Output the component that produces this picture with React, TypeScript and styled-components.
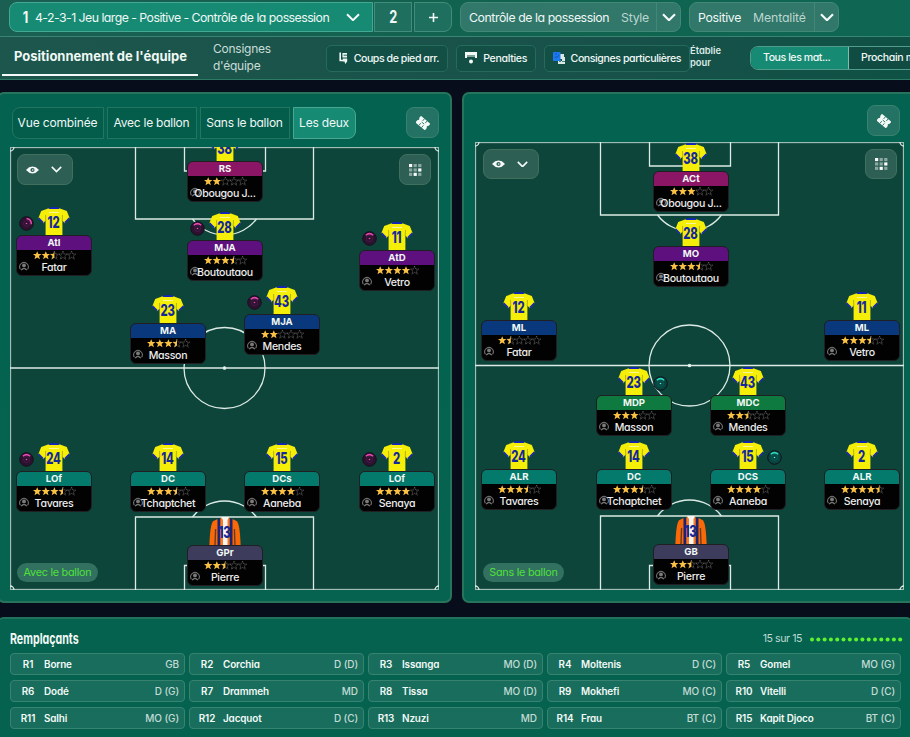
import React from 'react';
import styled, { createGlobalStyle } from 'styled-components';

const Global = createGlobalStyle`
  html, body { margin: 0; padding: 0; background: #080d1b; overflow: hidden; }
  * { box-sizing: border-box; }
  svg { flex: none; }
  body {
    font-family: Inter, "Liberation Sans", sans-serif;
    font-feature-settings: "cv11" 1;
    color: #f1f8f5;
  }
`;

const Page = styled.div`
  width: 910px;
  height: 737px;
  display: flex;
  flex-direction: column;
  overflow: hidden;
  background: #080d1b;
`;

const Label = styled.span<{ size: number; track?: number; weight?: number; tone?: string }>`
  font-size: ${p => p.size}px;
  letter-spacing: ${p => p.track ?? 0}px;
  font-weight: ${p => p.weight ?? 400};
  color: ${p => p.tone ?? '#eff8f5'};
  white-space: nowrap;
`;

/* ---------- header ---------- */

const TopBar = styled.div`
  height: 36px;
  flex: none;
  display: flex;
  align-items: flex-start;
  padding: 2px 0 0 9px;
  background: linear-gradient(90deg, #1a5f52, #10634f 60%, #0e6753);
`;

const TacticTab = styled.div`
  width: 364px;
  height: 30px;
  padding: 0 12px 0 12px;
  flex: none;
  display: flex;
  align-items: center;
  border: 1px solid #45a892;
  border-radius: 8px 0 0 8px;
  background: #178a74;
`;

const SlotTab = styled.div<{ last?: boolean }>`
  width: 38px;
  height: 30px;
  flex: none;
  margin-left: ${p => (p.last ? 2 : 1)}px;
  display: flex;
  align-items: center;
  justify-content: center;
  border: 1px solid #438c7c;
  border-radius: ${p => (p.last ? '0 8px 8px 0' : '0')};
  background: #1f6f5f;
`;

const Condensed = styled.span<{ size: number; squeeze: number; origin?: string }>`
  display: inline-block;
  font-size: ${p => p.size}px;
  font-weight: 700;
  line-height: 1;
  white-space: nowrap;
  transform: scaleX(${p => p.squeeze});
  transform-origin: ${p => p.origin ?? 'center'};
`;

const Picker = styled.div<{ w: number }>`
  width: ${p => p.w}px;
  height: 30px;
  flex: none;
  margin-left: 8px;
  display: flex;
  align-items: center;
  border: 1px solid #438876;
  border-radius: 8px;
  background: #31776a;
`;

const PickerText = styled.div`
  flex: 1;
  display: flex;
  align-items: center;
  gap: 12px;
  padding-left: 8px;
`;

const PickerArrow = styled.div`
  width: 24px;
  height: 28px;
  display: flex;
  align-items: center;
  justify-content: center;
  border-left: 1px solid #438876;
`;

const NavBar = styled.div`
  height: 44px;
  flex: none;
  display: flex;
  border-top: 1px solid #398573;
  border-bottom: 1px solid #2c7c65;
  background: linear-gradient(90deg, #1d564c, #175149 70%, #0f5145);
`;

const ActiveNav = styled.div`
  width: 196px;
  height: 39px;
  flex: none;
  margin-left: 2px;
  padding-left: 1px;
  display: flex;
  align-items: center;
  justify-content: center;
  border-bottom: 2px solid #f4faf8;
`;

const NavItem = styled.div`
  width: 98px;
  flex: none;
  margin-left: 15px;
  padding-top: 3px;
  font-size: 12px;
  line-height: 17px;
  letter-spacing: -0.25px;
  color: #c9ddd8;
`;

const NavButton = styled.div<{ w: number; gap: number }>`
  width: ${p => p.w}px;
  height: 27px;
  flex: none;
  margin: 8px 0 0 ${p => p.gap}px;
  padding: 0 8px 1px 0;
  display: flex;
  align-items: center;
  justify-content: flex-end;
  gap: 6px;
  border: 1px solid #266a5c;
  border-radius: 5px;
  background: #134f45;
`;

const Established = styled.div`
  width: 60px;
  flex: none;
  padding-top: 8px;
  font-size: 9.4px;
  line-height: 12px;
  font-weight: 600;
  color: #dbeae6;
`;

const MatchToggle = styled.div`
  display: flex;
  flex: none;
  width: 170px;
  height: 24px;
  margin-top: 9px;
  border: 1px solid #4f9d8a;
  border-radius: 8px 0 0 8px;
  overflow: hidden;
`;

const MatchOption = styled.div<{ active?: boolean }>`
  width: ${p => (p.active ? 98 : 80)}px;
  flex: none;
  padding: 0 0 1px 12px;
  display: flex;
  align-items: center;
  background: ${p => (p.active ? '#178a74' : '#114c42')};
  border-right: 1px solid #7fbdae;
`;

/* ---------- panels ---------- */

const Panels = styled.div`
  height: 511px;
  flex: none;
  margin: 12px -3px 0 -3px;
  display: flex;
  gap: 10px;
`;

const Panel = styled.section`
  width: 455px;
  flex: none;
  height: 511px;
  border: 2px solid #28735c;
  border-radius: 7px;
  background: linear-gradient(180deg, #036350, #05634f);
`;

const PanelHead = styled.div<{ h: number; pad: string }>`
  height: ${p => p.h}px;
  padding: ${p => p.pad};
  display: flex;
  align-items: flex-start;
`;

const ViewTab = styled.div<{ w: number; active?: boolean; first?: boolean }>`
  width: ${p => p.w}px;
  height: 32px;
  flex: none;
  margin-right: 3px;
  padding: 0 1px 1px 0;
  display: flex;
  align-items: center;
  justify-content: center;
  border: 1px solid ${p => (p.active ? '#4ba792' : '#24755f')};
  border-radius: ${p => (p.first ? '8px 0 0 8px' : p.active ? '0 8px 8px 0' : '0')};
  background: ${p => (p.active ? '#178a74' : '#045c4b')};
`;

const SquareButton = styled.div`
  width: 33px;
  height: 31px;
  margin-left: auto;
  display: flex;
  align-items: center;
  justify-content: center;
  border: 1px solid #3a8270;
  border-radius: 8px;
  background: #237263;
`;

const Pitch = styled.div<{ h: number }>`
  position: relative;
  width: 429px;
  height: ${p => p.h}px;
  margin-left: 11px;
  overflow: hidden;
  background: #0e453b;
`;

const Markings = styled.svg`
  display: block;
`;

const ViewMenu = styled.div<{ inset: number; h: number }>`
  position: absolute;
  left: ${p => p.inset}px;
  top: 7px;
  width: 56px;
  height: ${p => p.h}px;
  padding-right: 2px;
  display: flex;
  align-items: center;
  justify-content: center;
  gap: 12px;
  border: 1px solid #42705f;
  border-radius: 8px;
  background: #2d5f55;
`;

const GridMenu = styled.div<{ inset: number; h: number }>`
  position: absolute;
  right: ${p => p.inset}px;
  top: 7px;
  width: 32px;
  height: ${p => p.h}px;
  display: flex;
  align-items: center;
  justify-content: center;
  border: 1px solid #42705f;
  border-radius: 8px;
  background: #2d5f55;
`;

const PhaseTag = styled.div<{ inset: number }>`
  position: absolute;
  left: ${p => p.inset}px;
  bottom: 8px;
  width: 81px;
  height: 19px;
  padding-bottom: 1px;
  display: flex;
  align-items: center;
  justify-content: center;
  border-radius: 10px;
  background: #327060;
`;

/* ---------- players ---------- */

const PlayerNode = styled.div<{ x: number; y: number }>`
  position: absolute;
  left: ${p => p.x - 38}px;
  top: ${p => p.y - 28}px;
  width: 76px;
`;

const ShirtWrap = styled.div`
  height: 28px;
  display: flex;
  justify-content: center;
  padding-right: 1px;
`;

const ShirtNumber = styled.span`
  position: absolute;
  left: 0;
  top: 8px;
  width: 75px;
  text-align: center;
  font-size: 15.5px;
  line-height: 15px;
  font-weight: 800;
  color: #14289c;
  letter-spacing: -0.3px;
  transform: scaleX(0.73);
`;

const Duty = styled.svg<{ side: 'left' | 'right' }>`
  position: absolute;
  top: 9px;
  left: ${p => (p.side === 'left' ? 3 : 57)}px;
`;

const Card = styled.div`
  height: 41px;
  border: 1px solid #211f24;
  border-radius: 6px;
  overflow: hidden;
  background: #020202;
`;

const Role = styled.div<{ fill: string; edge: string }>`
  height: 15px;
  margin: -1px -1px 0;
  padding-bottom: 1px;
  display: flex;
  align-items: center;
  justify-content: center;
  border: 1px solid ${p => p.edge};
  border-bottom: 0;
  border-radius: 6px 6px 0 0;
  background: ${p => p.fill};
  font-size: 9.6px;
  font-weight: 700;
`;

const Stars = styled.svg`
  display: block;
  margin: 1px auto 0;
`;

const NameRow = styled.div`
  position: relative;
  height: 15px;
  line-height: 16px;
  text-align: center;
  font-size: 10.6px;
  font-weight: 500;
  letter-spacing: -0.3px;
  color: #ececec;
  white-space: nowrap;
`;

const Face = styled.svg`
  position: absolute;
  left: 2px;
  top: 1px;
`;

const NameText = styled.span`
  position: relative;
`;

/* ---------- bench ---------- */

const Bench = styled.section`
  height: 130px;
  flex: none;
  margin: 14px -3px 0 -3px;
  padding: 0 12px 0 13px;
  border-top: 2px solid #1f735d;
  border-radius: 7px 7px 0 0;
  background: #04624f;
`;

const BenchHead = styled.div`
  height: 34px;
  padding: 5px 0 0;
  display: flex;
  align-items: center;
  justify-content: space-between;
`;

const BenchCount = styled.div`
  display: flex;
  align-items: center;
  gap: 7px;
  margin-right: -2px;
`;

const BenchGrid = styled.div`
  display: grid;
  grid-template-columns: repeat(5, 1fr);
  column-gap: 4px;
  row-gap: 5px;
`;

const BenchCell = styled.div`
  height: 22px;
  padding: 0 5px 1px 0;
  display: grid;
  grid-template-columns: 33px 1fr auto;
  align-items: center;
  border: 1px solid #388370;
  border-radius: 4px;
  background: #196d5d;
  font-size: 9.9px;
  font-weight: 600;
  letter-spacing: -0.12px;
  color: #f3faf7;
`;

const BenchSlot = styled.span`
  text-align: center;
  padding-left: 1px;
`;

const BenchPosition = styled.span`
  font-size: 10px;
  font-weight: 500;
  letter-spacing: -0.1px;
  color: #c3dcd5;
`;

/* ---------- drawings ---------- */

const Chevron = ({ w, stroke = 2 }: { w: number; stroke?: number }) => (
  <svg width={w} height={w * 0.62} viewBox="0 0 14 8.7">
    <path d="M1 1.2 7 7.2 13 1.2" fill="none" stroke="#f3faf8" strokeWidth={stroke} />
  </svg>
);

const SetPieceIcon = () => (
  <svg width="9" height="12" viewBox="0 0 9 12">
    <path d="M1.2 .5V8.5H4" fill="none" stroke="#f3faf8" strokeWidth="1.6" />
    <path d="M3.4 1H8V5.4H3.4ZM3.8 6.6H8.2V9.5L6.2 12L5.5 9.5H3.8Z" fill="#eaf4f1" />
    <path d="M4.6 3.2H8" stroke="#17564b" strokeWidth=".9" />
  </svg>
);

const PenaltyIcon = () => (
  <svg width="12" height="12" viewBox="0 0 12 12">
    <path d="M0 0H12V6H10V3H2V6H0Z" fill="#f3faf8" />
    <path d="M2 3H10V5H2Z" fill="#7fa39b" />
    <circle cx="6" cy="9.6" r="2" fill="#f3faf8" />
  </svg>
);

const InstructionIcon = () => (
  <svg width="12" height="12" viewBox="0 0 12 12">
    <path d="M7 2H11V5H12V12H5V9H9V7H7Z" fill="#dbe9e6" />
    <path d="M6 8H8V10H6ZM9 9H12V10H9Z" fill="#4f7f75" />
    <rect width="7.5" height="9" rx="0.6" fill="#1b78ee" />
    <path d="M1.8 6 3 4.5 4 5.6 6 3M2 2H4" fill="none" stroke="#0e50af" strokeWidth="0.8" />
  </svg>
);

const TicketIcon = () => (
  <svg width="14" height="14" viewBox="0 0 13 13">
    <g transform="rotate(40 6.5 6.5)">
      <path d="M.8 2.6H12.2V5L11.2 6.5L12.2 8V10.6H.8V8L1.8 6.5L.8 5Z" fill="#f3faf8" />
      <path d="M5 2.6V5.2M5 8V10.6M8.2 2.6V5.2M8.2 8V10.6M5 6.6H8" stroke="#237263" strokeWidth=".8" />
    </g>
  </svg>
);

const EyeIcon = () => (
  <svg width="13" height="8" viewBox="0 0 13 8">
    <path d="M0 4Q3 .6 6.5 .6T13 4Q10 7.4 6.5 7.4T0 4Z" fill="#f5faf8" />
    <circle cx="6.5" cy="4" r="2.1" fill="#2d5f55" />
    <circle cx="6.7" cy="4" r=".8" fill="#f5faf8" />
  </svg>
);

const GridIcon = () => {
  const bright = [0, 5, 7];
  return (
    <svg width="13" height="12" viewBox="0 0 13 12">
      {Array.from({ length: 9 }, (_, i) => (
        <rect
          key={i}
          x={(i % 3) * 4.6}
          y={Math.floor(i / 3) * 4.4}
          width="3.2"
          height="3.1"
          fill={bright.includes(i) ? '#ffffff' : '#8ca9a1'}
        />
      ))}
    </svg>
  );
};

const STAR = 'M4.2 0 5.4 2.9H8.4L6 4.9 6.9 8 4.2 6.2 1.5 8 2.4 4.9 0 2.9H3Z';
const HALF = 'M4.2 0 4.2 6.2 1.5 8 2.4 4.9 0 2.9H3Z';

const Rating = ({ value }: { value: number }) => (
  <Stars width="43" height="9" viewBox="0 0 43 9">
    {[0, 1, 2, 3, 4].map(i => (
      <g key={i} transform={`translate(${i * 8.6} .2)`}>
        {value >= i + 1 ? (
          <path d={STAR} fill="#fbc143" />
        ) : (
          <>
            <path d={STAR} fill="none" stroke="#858588" strokeWidth=".6" strokeDasharray="1.2 .5" />
            {value > i && <path d={HALF} fill="#fbc143" />}
          </>
        )}
      </g>
    ))}
  </Stars>
);

const Shirt = () => (
  <svg width="32" height="28" viewBox="0 0 32 28">
    <path d="M10 1.6 3.2 4 .4 11 5.2 16.2 7.6 13.5V28H24.4V13.5L26.8 16.2 31.6 11 28.8 4 22 1.6Z" fill="#f5ee08" />
    <path d="M11.5 .2H20.5L21 2H11Z" fill="#1422c4" />
    <path d="M.9 10.2 5.6 15 5 16.6.3 11.8ZM31.1 10.2 26.4 15 27 16.6 31.7 11.8Z" fill="#1422c4" />
    <path d="M7.5 8 7.8 14M24.5 8 24.2 14" stroke="#a9a300" strokeWidth=".8" />
    <path d="M11 5H21V6H11Z" fill="#fbf69a" />
  </svg>
);

const KeeperShirt = () => (
  <svg width="32" height="28" viewBox="0 0 32 28">
    <path d="M8 2.2 4 4.2Q1 8 .4 28H31.6Q31 8 28 4.2L24 2.2Z" fill="#fb6808" />
    <path d="M6.6 12 6 28M25.4 12 26 28" stroke="#6b3c1b" strokeWidth="1.4" />
    <path d="M8.5 2H11.5V28H8.5ZM20.5 2H23.5V28H20.5Z" fill="#1a2470" />
    <path d="M11.5 1H14.5V28H11.5ZM17.5 1H20.5V28H17.5Z" fill="#fb7a24" />
    <path d="M12 0H20L18.5 3V28H14V3Z" fill="#f7f5f2" />
  </svg>
);

const FaceIcon = () => (
  <Face width="10" height="10" viewBox="0 0 10 10">
    <path d="M1.4 8.2A4.3 4.3 0 1 1 8.6 8.2" fill="none" stroke="#6c6c6c" strokeWidth="1.1" />
    <circle cx="5" cy="4.4" r="1.9" fill="#7b7b7b" />
    <path d="M1.6 8.8Q5 4.8 8.4 8.8L7.6 9.5 5 7.9 2.4 9.5Z" fill="#757575" />
  </Face>
);

type Side = 'left' | 'right';

const DutyIcon = ({ side, turn = 0 }: { side: Side; turn?: number }) => {
  const pink = side === 'left';
  return (
    <Duty side={side} width="15" height="15" viewBox="0 0 15 15">
      <circle cx="7.5" cy="7.5" r="6.8" fill={pink ? '#2c1230' : '#064540'} stroke="#15111c" strokeWidth="1" />
      <circle cx="7.5" cy="7.5" r="3" fill="none" stroke={pink ? '#501b49' : '#0b6259'} strokeWidth=".8" />
      <path
        d="M3.8 4.3Q7.5 1 11.2 4.3"
        fill="none"
        stroke={pink ? '#e84bb2' : '#2edac2'}
        strokeWidth="1.5"
        transform={`rotate(${turn} 7.5 7.5)`}
      />
      <circle cx="7.5" cy="7.5" r=".8" fill={pink ? '#e650b2' : '#5cead8'} />
    </Duty>
  );
};

/* ---------- data ---------- */

const ROLE_COLOURS = {
  pink: ['#8b1666', '#a8397f'],
  purple: ['#5e107f', '#7c3199'],
  blue: ['#09387c', '#2b5799'],
  teal: ['#047a6d', '#2d988a'],
  green: ['#0f7a3f', '#33945b'],
  grey: ['#3e3c5d', '#575576'],
};

interface Player {
  x: number;
  y: number;
  no: number;
  role: string;
  tone: keyof typeof ROLE_COLOURS;
  stars: number;
  name: string;
  duty?: Side;
  turn?: number;
}

const withBall: Player[] = [
  { x: 215, y: 14, no: 38, role: 'RS', tone: 'pink', stars: 2, name: 'Obougou J...' },
  { x: 44, y: 88, no: 12, role: 'AtI', tone: 'purple', stars: 2.5, name: 'Fatar', duty: 'left', turn: 50 },
  { x: 215, y: 93, no: 28, role: 'MJA', tone: 'purple', stars: 3.5, name: 'Boutoutaou', duty: 'left' },
  { x: 387, y: 103, no: 11, role: 'AtD', tone: 'purple', stars: 4, name: 'Vetro', duty: 'left' },
  { x: 158, y: 176, no: 23, role: 'MA', tone: 'blue', stars: 3.5, name: 'Masson' },
  { x: 272, y: 167, no: 43, role: 'MJA', tone: 'blue', stars: 2, name: 'Mendes', duty: 'left' },
  { x: 44, y: 324, no: 24, role: 'LOf', tone: 'teal', stars: 3.5, name: 'Tavares', duty: 'left' },
  { x: 158, y: 324, no: 14, role: 'DC', tone: 'teal', stars: 3.5, name: 'Tchaptchet' },
  { x: 272, y: 324, no: 15, role: 'DCs', tone: 'teal', stars: 4, name: 'Aaneba' },
  { x: 387, y: 324, no: 2, role: 'LOf', tone: 'teal', stars: 4, name: 'Senaya', duty: 'left' },
  { x: 215, y: 398, no: 13, role: 'GPr', tone: 'grey', stars: 2.5, name: 'Pierre' },
];

const withoutBall: Player[] = [
  { x: 216, y: 29, no: 38, role: 'ACt', tone: 'pink', stars: 3, name: 'Obougou J...' },
  { x: 216, y: 104, no: 28, role: 'MO', tone: 'purple', stars: 3.5, name: 'Boutoutaou' },
  { x: 44, y: 178, no: 12, role: 'ML', tone: 'blue', stars: 1.5, name: 'Fatar' },
  { x: 387, y: 178, no: 11, role: 'ML', tone: 'blue', stars: 3.5, name: 'Vetro' },
  { x: 159, y: 253, no: 23, role: 'MDP', tone: 'green', stars: 3, name: 'Masson', duty: 'right' },
  { x: 273, y: 253, no: 43, role: 'MDC', tone: 'green', stars: 2.5, name: 'Mendes' },
  { x: 44, y: 327, no: 24, role: 'ALR', tone: 'teal', stars: 3.5, name: 'Tavares' },
  { x: 159, y: 327, no: 14, role: 'DC', tone: 'teal', stars: 3.5, name: 'Tchaptchet' },
  { x: 273, y: 327, no: 15, role: 'DCS', tone: 'teal', stars: 4, name: 'Aaneba', duty: 'right' },
  { x: 387, y: 327, no: 2, role: 'ALR', tone: 'teal', stars: 4.5, name: 'Senaya' },
  { x: 216, y: 402, no: 13, role: 'GB', tone: 'grey', stars: 2.5, name: 'Pierre' },
];

const bench: [string, string][] = [
  ['Borne', 'GB'], ['Corchia', 'D (D)'], ['Issanga', 'MO (D)'], ['Moltenis', 'D (C)'], ['Gomel', 'MO (G)'],
  ['Dodé', 'D (G)'], ['Drammeh', 'MD'], ['Tissa', 'MO (D)'], ['Mokhefi', 'MO (C)'], ['Vitelli', 'D (C)'],
  ['Salhi', 'MO (G)'], ['Jacquot', 'D (C)'], ['Nzuzi', 'MD'], ['Frau', 'BT (C)'], ['Kapit Djoco', 'BT (C)'],
];

const PlayerCard = ({ p }: { p: Player }) => {
  const [fill, edge] = ROLE_COLOURS[p.tone];
  return (
    <PlayerNode x={p.x} y={p.y}>
      <ShirtWrap>{p.tone === 'grey' ? <KeeperShirt /> : <Shirt />}</ShirtWrap>
      <ShirtNumber>{p.no}</ShirtNumber>
      {p.duty && <DutyIcon side={p.duty} turn={p.turn} />}
      <Card>
        <Role fill={fill} edge={edge}>{p.role}</Role>
        <Rating value={p.stars} />
        <NameRow>
          <FaceIcon />
          <NameText>{p.name}</NameText>
        </NameRow>
      </Card>
    </PlayerNode>
  );
};

interface FieldProps {
  h: number;
  half: number;
  boxBottom: number;
  lowerBox: number;
  players: Player[];
  tag: string;
  menuH: number;
  leftInset: number;
  rightInset: number;
}

const Field = (f: FieldProps) => (
  <Pitch h={f.h}>
    <Markings width="429" height={f.h} fill="none" stroke="#dcebe5" strokeWidth="1.3">
      <rect x=".5" y=".5" width="428" height={f.h - 1} stroke="#9fbdb4" />
      <path d={`M0 ${f.half}H429`} strokeWidth="1.6" />
      <circle cx="214.5" cy={f.half} r="40.5" />
      <circle cx="214.5" cy={f.half} r="1.2" fill="#fff" />
      <path d={`M125.5 0V${f.boxBottom}H303.5V0M174.5 0V24H255.5V0`} />
      <path d={`M182.5 ${f.boxBottom}A40 40 0 0 0 246.5 ${f.boxBottom}`} />
      <path d={`M125.5 ${f.h}V${f.lowerBox}H303.5V${f.h}M174.5 ${f.h}V${f.h - 24.5}H255.5V${f.h}`} />
      <path d={`M182.5 ${f.lowerBox}A40 40 0 0 1 246.5 ${f.lowerBox}`} />
      <path d={`M0 4A4 4 0 0 0 4 0M425 0A4 4 0 0 0 429 4M0 ${f.h - 4}A4 4 0 0 1 4 ${f.h}M425 ${f.h}A4 4 0 0 1 429 ${f.h - 4}`} />
    </Markings>
    {f.players.map(p => <PlayerCard key={p.no} p={p} />)}
    <ViewMenu inset={f.leftInset} h={f.menuH}><EyeIcon /><Chevron w={11} stroke={2.1} /></ViewMenu>
    <GridMenu inset={f.rightInset} h={f.menuH}><GridIcon /></GridMenu>
    <PhaseTag inset={f.leftInset}><Label size={10.8} track={-0.25} tone="#4fe03a">{f.tag}</Label></PhaseTag>
  </Pitch>
);

const TacticName = styled.div`
  flex: 1;
  display: flex;
  align-items: center;
  gap: 6px;
`;

const App = () => (
  <>
    <Global />
    <Page>
      <TopBar>
        <TacticTab>
          <TacticName>
            <Condensed size={16} squeeze={0.8}>1</Condensed>
            <Label size={12.3} track={-0.53}>4-2-3-1 Jeu large - Positive - Contrôle de la possession</Label>
          </TacticName>
          <Chevron w={14} />
        </TacticTab>
        <SlotTab><Condensed size={17} squeeze={0.75}>2</Condensed></SlotTab>
        <SlotTab last>
          <svg width="9" height="9"><path d="M4.5 0V9M0 4.5H9" stroke="#f3faf8" strokeWidth="1.6" /></svg>
        </SlotTab>
        <Picker w={221}>
          <PickerText>
            <Label size={12.3} track={-0.43}>Contrôle de la possession</Label>
            <Label size={12.3} track={-0.3} tone="#bcd6cf">Style</Label>
          </PickerText>
          <PickerArrow><Chevron w={14} stroke={2.2} /></PickerArrow>
        </Picker>
        <Picker w={150}>
          <PickerText>
            <Label size={12.3} track={-0.3}>Positive</Label>
            <Label size={12.3} track={-0.15} tone="#bcd6cf">Mentalité</Label>
          </PickerText>
          <PickerArrow><Chevron w={14} stroke={2.2} /></PickerArrow>
        </Picker>
      </TopBar>
      <NavBar>
        <ActiveNav><Label size={13} weight={700}>Positionnement de l'équipe</Label></ActiveNav>
        <NavItem>Consignes<br />d'équipe</NavItem>
        <NavButton w={122} gap={15}>
          <SetPieceIcon /><Label size={10.6} weight={500} track={-0.45}>Coups de pied arr.</Label>
        </NavButton>
        <NavButton w={80} gap={8}>
          <PenaltyIcon /><Label size={10.6} weight={500} track={-0.35}>Penalties</Label>
        </NavButton>
        <NavButton w={146} gap={8}>
          <InstructionIcon /><Label size={10.6} weight={500} track={-0.42}>Consignes particulières</Label>
        </NavButton>
        <Established>Établie<br />pour</Established>
        <MatchToggle>
          <MatchOption active><Label size={10.6} weight={500} track={-0.45}>Tous les mat...</Label></MatchOption>
          <MatchOption><Label size={10.6} weight={500} track={-0.35}>Prochain match</Label></MatchOption>
        </MatchToggle>
      </NavBar>

      <Panels>
        <Panel>
          <PanelHead h={53} pad="13px 11px 0 13px">
            <ViewTab w={92} first><Label size={12} track={-0.15}>Vue combinée</Label></ViewTab>
            <ViewTab w={90}><Label size={12} track={-0.25}>Avec le ballon</Label></ViewTab>
            <ViewTab w={90}><Label size={12} track={-0.25}>Sans le ballon</Label></ViewTab>
            <ViewTab w={63} active><Label size={12} track={-0.2}>Les deux</Label></ViewTab>
            <SquareButton><TicketIcon /></SquareButton>
          </PanelHead>
          <Field
            h={443} half={221} boxBottom={72} lowerBox={370}
            players={withBall} tag="Avec le ballon" menuH={31} leftInset={7} rightInset={8}
          />
        </Panel>
        <Panel>
          <PanelHead h={48} pad="11px 15px 0 13px">
            <SquareButton><TicketIcon /></SquareButton>
          </PanelHead>
          <Field
            h={448} half={223.5} boxBottom={73} lowerBox={374}
            players={withoutBall} tag="Sans le ballon" menuH={30} leftInset={8} rightInset={7}
          />
        </Panel>
      </Panels>

      <Bench>
        <BenchHead>
          <Condensed size={15} squeeze={0.71} origin="left">Remplaçants</Condensed>
          <BenchCount>
            <Label size={10.6} track={-0.45} tone="#bedad2">15 sur 15</Label>
            <svg width="94" height="6">
              {bench.map((_, i) => <circle key={i} cx={3 + i * 6.3} cy="3.4" r="2" fill="#5df32f" />)}
            </svg>
          </BenchCount>
        </BenchHead>
        <BenchGrid>
          {bench.map(([name, pos], i) => (
            <BenchCell key={name}>
              <BenchSlot>R{i + 1}</BenchSlot>
              <span>{name}</span>
              <BenchPosition>{pos}</BenchPosition>
            </BenchCell>
          ))}
        </BenchGrid>
      </Bench>
    </Page>
  </>
);

export default App;
